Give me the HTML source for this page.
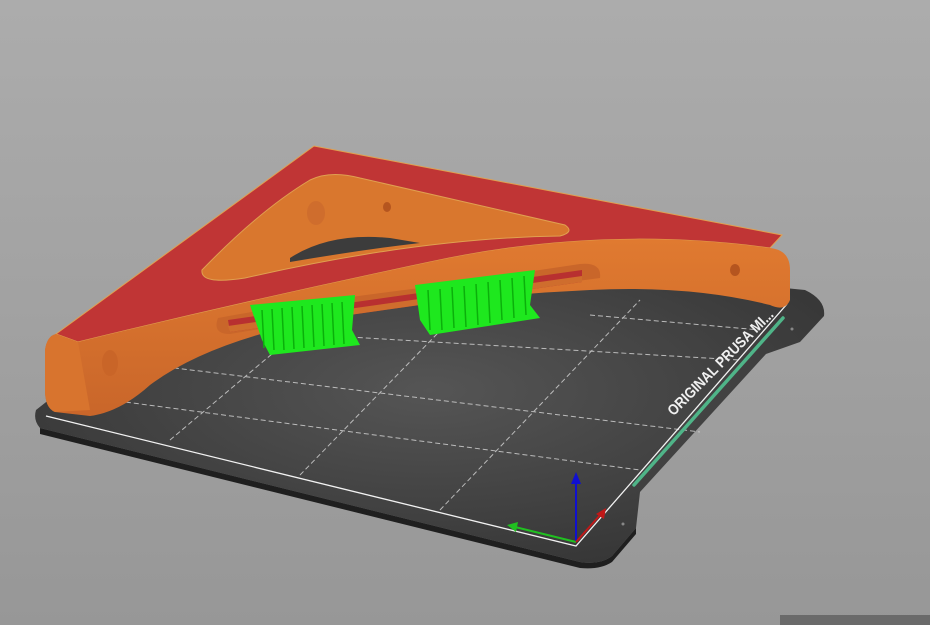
<!DOCTYPE html>
<html><head><style>
html,body{margin:0;padding:0;width:930px;height:625px;overflow:hidden;background:#a3a3a3}
svg{display:block}
</style></head><body>
<svg width="930" height="625" viewBox="0 0 930 625" xmlns="http://www.w3.org/2000/svg">
<defs>
<linearGradient id="bg" x1="0" y1="0" x2="0" y2="1">
<stop offset="0" stop-color="#acacac"/><stop offset="1" stop-color="#979797"/></linearGradient>
<radialGradient id="bed" cx="0.5" cy="0.45" r="0.6">
<stop offset="0" stop-color="#555"/><stop offset="1" stop-color="#363636"/></radialGradient>
<linearGradient id="face" x1="0" y1="0" x2="0" y2="1">
<stop offset="0" stop-color="#e07a30"/><stop offset="1" stop-color="#c9662a"/></linearGradient>
</defs>
<rect width="930" height="625" fill="url(#bg)"/>
<rect x="780" y="615" width="150" height="10" fill="#6a6a6a"/>
<!-- bed -->
<path d="M36,410 L150,320 L400,250 L805,290 Q826,300 824,316 L800,342 L766,354 L640,492 L636,528 L612,556 Q600,565 580,562 L40,428 Q33,420 36,410 Z" fill="url(#bed)"/>
<path d="M40,428 L580,562 Q600,565 612,556 L636,528 L636,534 L612,562 Q600,570 580,568 L40,434 Z" fill="#1f1f1f"/>
<!-- grid -->
<g stroke="#cfcfcf" stroke-width="1" stroke-dasharray="5,3" fill="none" opacity="0.85">
<line x1="170" y1="440" x2="330" y2="305"/>
<line x1="300" y1="475" x2="470" y2="300"/>
<line x1="440" y1="510" x2="640" y2="300"/>
<line x1="150" y1="365" x2="700" y2="432"/>
<line x1="230" y1="330" x2="740" y2="360"/>
<line x1="110" y1="400" x2="640" y2="470"/>
<line x1="590" y1="315" x2="760" y2="330"/>
</g>
<polyline points="46,416 576,546 787,304" fill="none" stroke="#f2f2f2" stroke-width="1.3"/>
<line x1="634" y1="485" x2="783" y2="318" stroke="#4fb488" stroke-width="3.5" stroke-linecap="round"/>
<text x="0" y="0" transform="translate(724,366) rotate(-45) scale(0.88,1)" text-anchor="middle" font-family="'Liberation Sans',sans-serif" font-size="15" font-weight="bold" fill="#f0f0f0">ORIGINAL PRUSA MI...</text>
<circle cx="792" cy="329" r="1.5" fill="#888"/><circle cx="623" cy="524" r="1.5" fill="#888"/>
<!-- axes -->
<line x1="576" y1="542" x2="576" y2="480" stroke="#1010d0" stroke-width="2"/>
<polygon points="571,484 581,484 576,472" fill="#1010d0"/>
<line x1="576" y1="542" x2="515" y2="527" stroke="#20c020" stroke-width="2"/>
<polygon points="518,522 516,532 507,525" fill="#20c020"/>
<line x1="576" y1="542" x2="601" y2="514" stroke="#c01818" stroke-width="2"/>
<polygon points="596,514 604,519 606,508" fill="#c01818"/>
<!-- part: red top -->
<path d="M56,334 L314,146 L782,235 L770,248 Q600,225 430,262 Q250,300 78,342 Z" fill="#c03535" stroke="#e0a050" stroke-width="1"/>
<!-- inner triangle hole -->
<path d="M202,270 Q260,210 310,180 Q330,170 360,178 L565,225 Q575,232 560,236 Q420,238 245,278 Q200,285 202,270 Z" fill="#d9772e" stroke="#e0a050" stroke-width="1"/>
<path d="M290,258 Q330,232 390,238 L420,243 Q360,250 290,262 Z" fill="#3c3c3c"/>
<ellipse cx="316" cy="213" rx="9" ry="12" fill="#cf6d2d"/>
<ellipse cx="387" cy="207" rx="4" ry="5" fill="#b5551f"/>
<!-- front face of arm -->
<path d="M78,342 Q250,300 430,262 Q600,225 770,248 Q790,250 790,270 L790,300 Q785,312 770,305 Q690,285 590,290 Q460,296 330,318 Q210,340 150,385 Q120,412 90,416 L55,412 Q45,408 45,390 L45,350 Q47,336 56,334 Z" fill="url(#face)"/>
<path d="M56,334 L78,342 L90,410 L55,412 Q45,408 45,390 L45,350 Q47,336 56,334 Z" fill="#d8742e"/>
<ellipse cx="110" cy="363" rx="8" ry="13" fill="#c96528"/>
<ellipse cx="735" cy="270" rx="5" ry="6" fill="#b5551f"/>
<!-- slot -->
<path d="M218,318 Q300,303 420,288 L580,264 Q602,262 600,278 L420,302 L230,334 Q212,334 218,318 Z" fill="#c9662a"/>
<path d="M228,320 L582,270 L582,282 L230,332 Z" fill="#b83030"/>
<path d="M228,326 L582,276 L582,282 L230,332 Z" fill="#cf6d2d"/>
<!-- supports -->
<g fill="#1ee81e">
<path d="M250,305 L355,295 L352,330 L360,345 L270,355 L262,340 Z"/>
<path d="M415,285 L535,270 L530,305 L540,318 L430,335 L420,320 Z"/>
</g>
<g stroke="#0bb00b" stroke-width="1.5">
<line x1="262" y1="310" x2="264" y2="348"/><line x1="272" y1="309" x2="274" y2="350"/><line x1="282" y1="308" x2="284" y2="350"/>
<line x1="292" y1="307" x2="294" y2="349"/><line x1="302" y1="306" x2="304" y2="348"/><line x1="312" y1="305" x2="314" y2="347"/>
<line x1="322" y1="304" x2="324" y2="346"/><line x1="332" y1="303" x2="334" y2="345"/><line x1="342" y1="302" x2="344" y2="344"/>
<line x1="428" y1="290" x2="430" y2="330"/><line x1="440" y1="289" x2="442" y2="330"/><line x1="452" y1="287" x2="454" y2="328"/>
<line x1="464" y1="286" x2="466" y2="327"/><line x1="476" y1="284" x2="478" y2="325"/><line x1="488" y1="282" x2="490" y2="323"/>
<line x1="500" y1="280" x2="502" y2="320"/><line x1="512" y1="278" x2="514" y2="318"/><line x1="524" y1="276" x2="526" y2="315"/>
</g>
</svg>
</body></html>
